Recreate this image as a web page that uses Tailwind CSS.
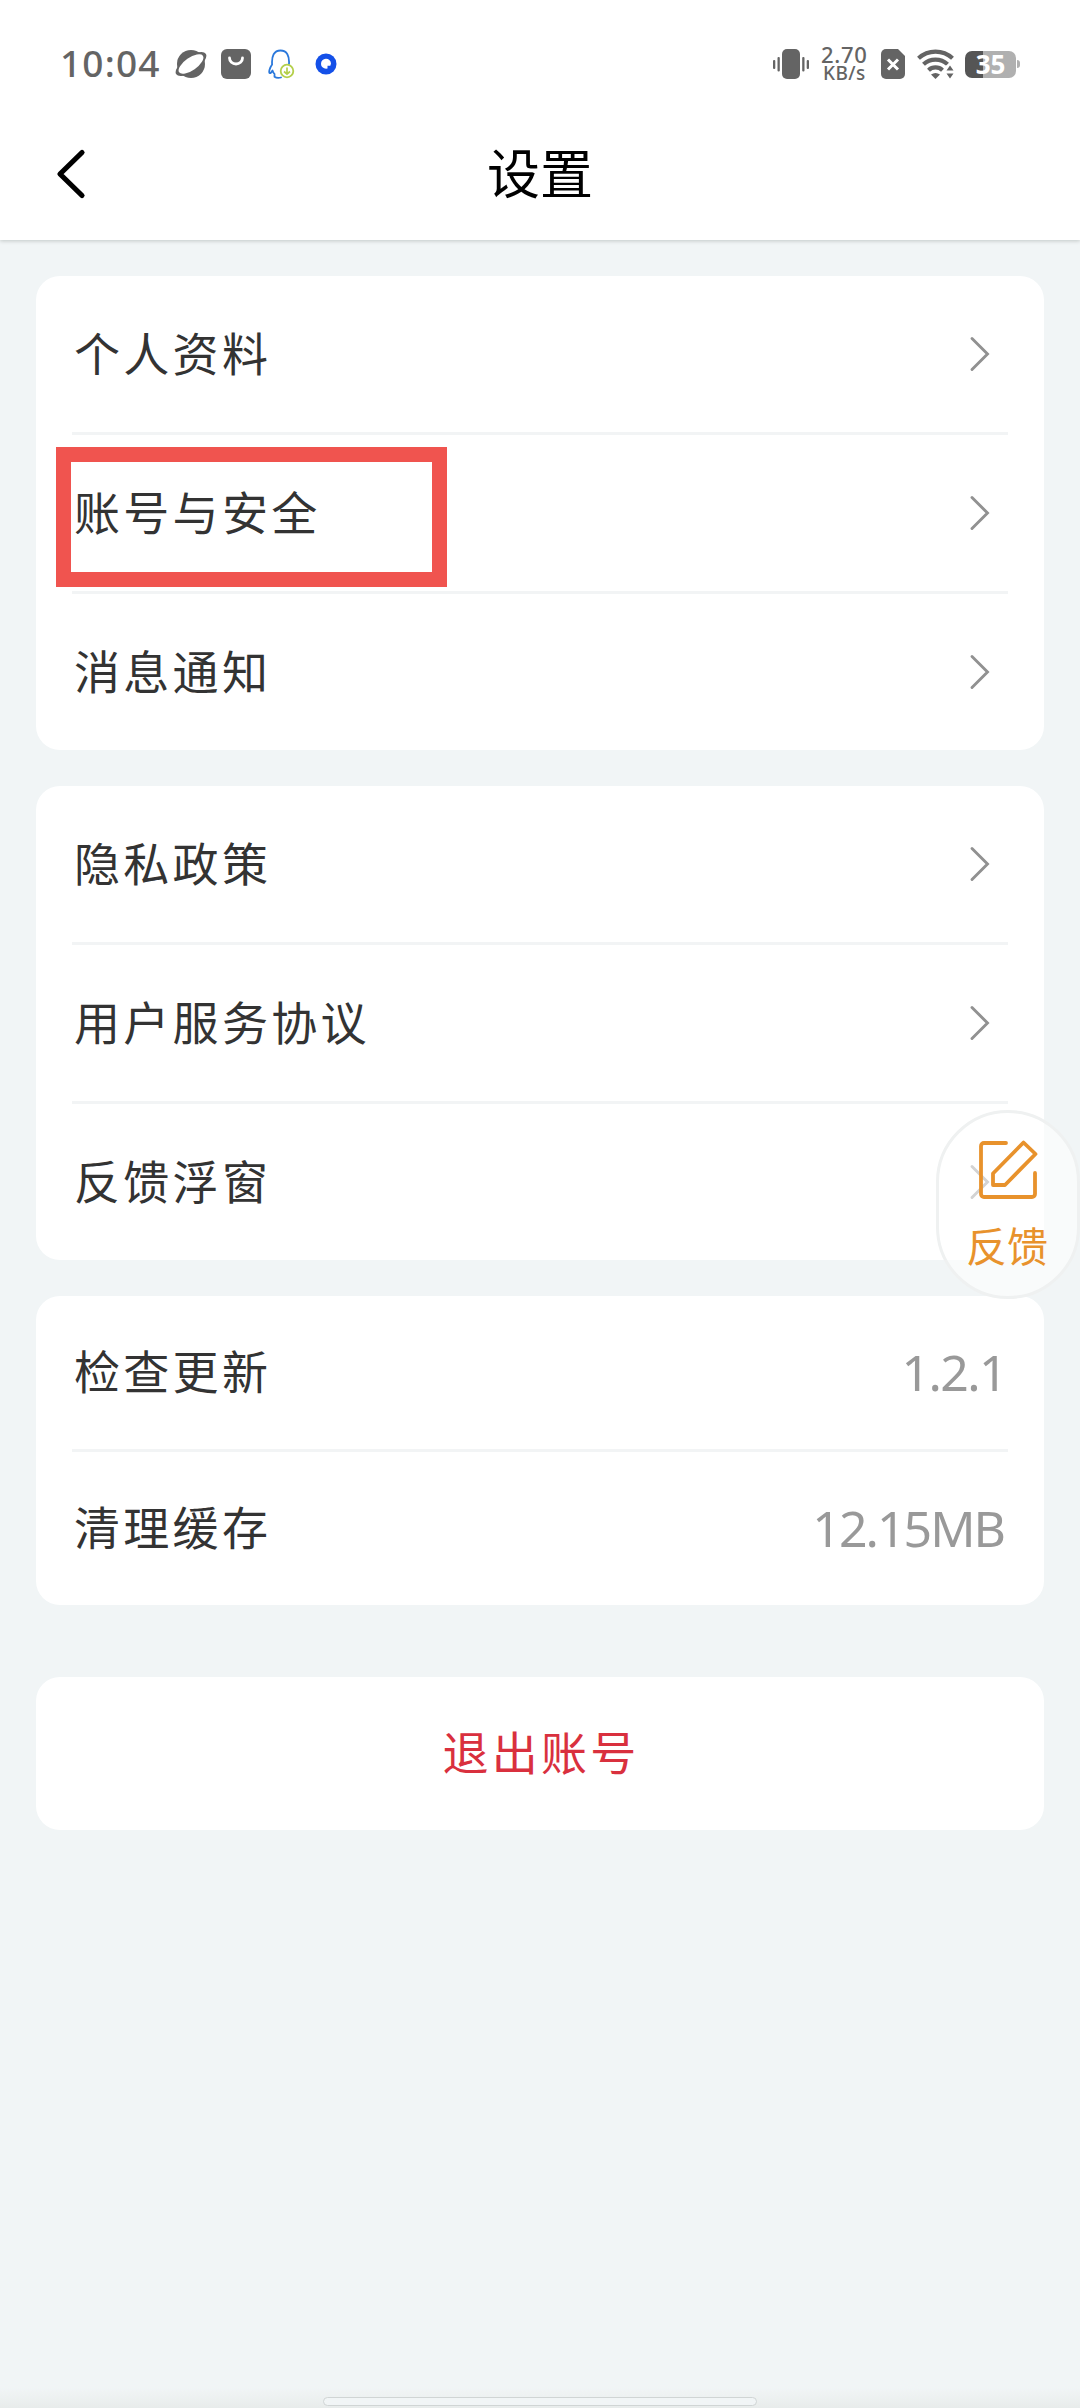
<!DOCTYPE html>
<html lang="zh-CN">
<head>
<meta charset="utf-8">
<title>设置</title>
<script src="https://cdn.jsdelivr.net/npm/@tailwindcss/browser@4"></script>
</head>
<body class="bg-[#f1f5f6]">
<div class="relative w-[1080px] h-[2408px] overflow-hidden bg-[#f1f5f6] font-['Noto_Sans_CJK_SC',sans-serif] text-[#333]">

  <header class="h-[240px] bg-white shadow-[0_1px_4px_rgba(0,20,10,0.2)]">
    <!-- Status bar -->
    <div class="h-[108px] pt-5 pl-[60px] pr-[57px] flex items-center justify-between text-[#646464] font-['Noto_Sans',sans-serif]">
      <div class="flex items-center">
        <span class="w-[115px] pb-[3px] text-[37px] font-medium leading-none tracking-[1.2px]">10:04</span>
        <svg class="w-8 h-8" viewBox="0 0 32 32">
          <circle cx="16" cy="16" r="14" fill="#646464"/>
          <ellipse cx="16" cy="16" rx="18" ry="7.5" transform="rotate(-35 16 16)" fill="#646464"/>
          <ellipse cx="16" cy="16" rx="14.5" ry="6.3" transform="rotate(-35 16 16)" fill="#fff"/>
        </svg>
        <svg class="ml-[14px] w-[30px] h-[30px]" viewBox="0 0 30 30">
          <rect width="30" height="30" rx="6" fill="#646464"/>
          <path d="M8.5 9a6.5 6 0 0 0 13 0" fill="none" stroke="#fff" stroke-width="2.8" stroke-linecap="round"/>
        </svg>
        <svg class="ml-[17px] w-[28px] h-[30px]" viewBox="0 0 28 30">
          <path d="M13 28.5c-2 .5-5 .3-6.500-.8L6.500 25c-1-.7-1.500-2-2-3.500C3.800 23 2.500 24.500 1.600 24c-1-1 0-5 2.500-8.500C3.500 7 6 1.500 12.500 1.500S21.500 7 21 15" fill="none" stroke="#2a78dc" stroke-width="1.8" stroke-linecap="round" stroke-linejoin="round"/>
          <circle cx="19" cy="22" r="6.300" fill="#fff" stroke="#b4cf4a" stroke-width="1.800"/>
          <path d="M19 18.500v6.500M16 22.500l3 2.700 3-2.700" fill="none" stroke="#b4cf4a" stroke-width="1.700"/>
        </svg>
        <svg class="ml-[19px] w-[22px] h-[22px]" viewBox="0 0 22 22">
          <circle cx="11" cy="11" r="10.500" fill="#1450e8"/>
          <path d="M16 10.500a5 5 0 1 0-5 5.300l1.500-.2v-2.800h2.800z" fill="#fff"/>
        </svg>
      </div>
      <div class="flex items-center">
        <svg class="w-[36px] h-[30px]" viewBox="0 0 36 30" fill="#646464">
          <rect x="9" width="18" height="30" rx="5"/>
          <rect x="0" y="11" width="2.300" height="9" rx="1"/><rect x="4.500" y="8" width="2.300" height="14.500" rx="1"/>
          <rect x="29.200" y="8" width="2.300" height="14.500" rx="1"/><rect x="33.700" y="11" width="2.300" height="9" rx="1"/>
        </svg>
        <div class="ml-[12px] w-[60px] flex flex-col font-medium leading-[19px]">
          <span class="text-[22px] tracking-[0.7px]">2.70</span>
          <span class="pl-[2px] text-[19px] tracking-[0.4px]">KB/s</span>
        </div>
        <svg class="w-6 h-[30px]" viewBox="0 0 24 30">
          <path d="M5 0h12l7 7v18a5 5 0 0 1-5 5H5a5 5 0 0 1-5-5V5a5 5 0 0 1 5-5z" fill="#646464"/>
          <path d="M7 10.500l10 10M17 10.500l-10 10" stroke="#fff" stroke-width="3"/>
        </svg>
        <svg class="ml-3 w-[38px] h-[30px]" viewBox="0 0 38 30">
          <g fill="none" stroke="#646464" stroke-width="4.200">
            <path d="M1.500 9.200a25 25 0 0 1 34 0"/>
            <path d="M6.500 15.300a17.500 17.500 0 0 1 24 0"/>
            <path d="M11.500 21.200a10.300 10.300 0 0 1 14 0"/>
          </g>
          <path d="M14 25.500q4.500-3 9 0L18.500 30z" fill="#646464"/>
          <path d="M28.500 16.500h10v14h-10z" fill="#fff"/>
          <path d="M29.500 21.500l3.500-5 3.500 5zM29.500 24.500h7l-3.500 5z" fill="#646464"/>
        </svg>
        <div class="ml-[10px] w-[58px] flex items-center">
          <div class="w-[51px] h-[27px] rounded-[7px] bg-linear-to-r from-[#555] from-35% to-[#b0b0b0] to-35% flex items-center justify-center text-white text-[26px] font-bold leading-[27px]">35</div>
          <div class="ml-px w-[2.5px] h-2 rounded-r-full bg-[#b0b0b0]"></div>
        </div>
      </div>
    </div>
    <!-- Title bar -->
    <div class="h-[132px] pl-[55px] flex items-center">
      <svg class="w-8 h-[52px]" viewBox="0 0 32 52"><path d="M27 4.500L5 26l22 21.500" fill="none" stroke="#000" stroke-width="5.200" stroke-linecap="round" stroke-linejoin="round"/></svg>
      <h1 class="ml-[-87px] pb-[5px] flex-1 text-center text-[53px] leading-none text-black font-normal">设置</h1>
    </div>
  </header>

  <main class="px-9 pt-9 text-[46px] tracking-[3.3px]">
    <section class="px-9 bg-white rounded-[24px]">
      <div class="h-[159px] pl-[2px] pr-[17px] flex items-center justify-between border-b-3 border-[#f2f4f5]">
        <span class="pb-[6px]">个人资料</span>
        <svg class="w-[22px] h-9" viewBox="0 0 22 36"><path d="M3 2.500L18.500 18 3 33.500" fill="none" stroke="#919191" stroke-width="2.900" stroke-linecap="round"/></svg>
      </div>
      <div class="h-[159px] pl-[2px] pr-[17px] flex items-center justify-between border-b-3 border-[#f2f4f5]">
        <span class="pb-[6px]">账号与安全</span>
        <svg class="w-[22px] h-9" viewBox="0 0 22 36"><path d="M3 2.500L18.500 18 3 33.500" fill="none" stroke="#919191" stroke-width="2.900" stroke-linecap="round"/></svg>
      </div>
      <div class="h-[156px] pl-[2px] pr-[17px] flex items-center justify-between">
        <span class="pb-[6px]">消息通知</span>
        <svg class="w-[22px] h-9" viewBox="0 0 22 36"><path d="M3 2.500L18.500 18 3 33.500" fill="none" stroke="#919191" stroke-width="2.900" stroke-linecap="round"/></svg>
      </div>
    </section>

    <section class="mt-9 px-9 bg-white rounded-[24px]">
      <div class="h-[159px] pl-[2px] pr-[17px] flex items-center justify-between border-b-3 border-[#f2f4f5]">
        <span class="pb-[6px]">隐私政策</span>
        <svg class="w-[22px] h-9" viewBox="0 0 22 36"><path d="M3 2.500L18.500 18 3 33.500" fill="none" stroke="#919191" stroke-width="2.900" stroke-linecap="round"/></svg>
      </div>
      <div class="h-[159px] pl-[2px] pr-[17px] flex items-center justify-between border-b-3 border-[#f2f4f5]">
        <span class="pb-[6px]">用户服务协议</span>
        <svg class="w-[22px] h-9" viewBox="0 0 22 36"><path d="M3 2.500L18.500 18 3 33.500" fill="none" stroke="#919191" stroke-width="2.900" stroke-linecap="round"/></svg>
      </div>
      <div class="h-[156px] pl-[2px] pr-[17px] flex items-center justify-between">
        <span class="pb-[6px]">反馈浮窗</span>
        <svg class="w-[22px] h-9" viewBox="0 0 22 36"><path d="M3 2.500L18.500 18 3 33.500" fill="none" stroke="#919191" stroke-width="2.900" stroke-linecap="round"/></svg>
      </div>
    </section>

    <section class="mt-9 px-9 bg-white rounded-[24px]">
      <div class="h-[156px] pl-[2px] flex items-center justify-between border-b-3 border-[#f2f4f5]">
        <span class="pb-[6px]">检查更新</span>
        <span class="pr-[2px] font-['Noto_Sans',sans-serif] text-[50px] text-[#999] tracking-[-1.6px]">1.2.1</span>
      </div>
      <div class="h-[153px] pl-[2px] flex items-center justify-between">
        <span class="pb-[6px]">清理缓存</span>
        <span class="pr-1 font-['Noto_Sans',sans-serif] text-[50px] text-[#999] tracking-[-2px]">12.15MB</span>
      </div>
    </section>

    <button class="mt-[72px] pb-[6px] pl-[2px] w-full h-[153px] bg-white rounded-[24px] text-[#d9303e] tracking-[3.3px] flex items-center justify-center">退出账号</button>
  </main>

  <!-- Highlight frame -->
  <div class="absolute left-[56px] top-[447px] w-[391px] h-[140px] border-[15px] border-[#f0544f]"></div>

  <!-- Floating feedback button -->
  <div class="absolute left-[936px] top-[1110px] w-[144px] h-[189px] rounded-[72px] border-3 border-[#eff1f1] bg-white/60 flex flex-col items-center text-[#e8922c]">
    <svg class="mt-[26px] ml-[-1px] w-[60px] h-[62px]" viewBox="0 0 60 62" fill="none" stroke="#e8922c" stroke-width="3.800" stroke-linecap="round" stroke-linejoin="round">
      <path d="M28 4H6a3 3 0 0 0-3 3v48a3 3 0 0 0 3 3h48a3 3 0 0 0 3-3V34"/>
      <path d="M45.500 3.500L57.500 15 27 46H15V34.500z"/>
    </svg>
    <span class="mt-[18px] ml-[-2px] text-[41px] leading-[50px] whitespace-nowrap">反馈</span>
  </div>

  <!-- Gesture bar -->
  <div class="absolute left-0 top-[2388px] w-full h-5 bg-linear-to-b from-[#f1f5f6] to-[#e8eceb]"></div>
  <div class="absolute left-[323px] top-[2397px] w-[434px] h-[9px] rounded-full border border-[#d0d5d5] bg-[#f1f5f6]"></div>
</div>
</body>
</html>
